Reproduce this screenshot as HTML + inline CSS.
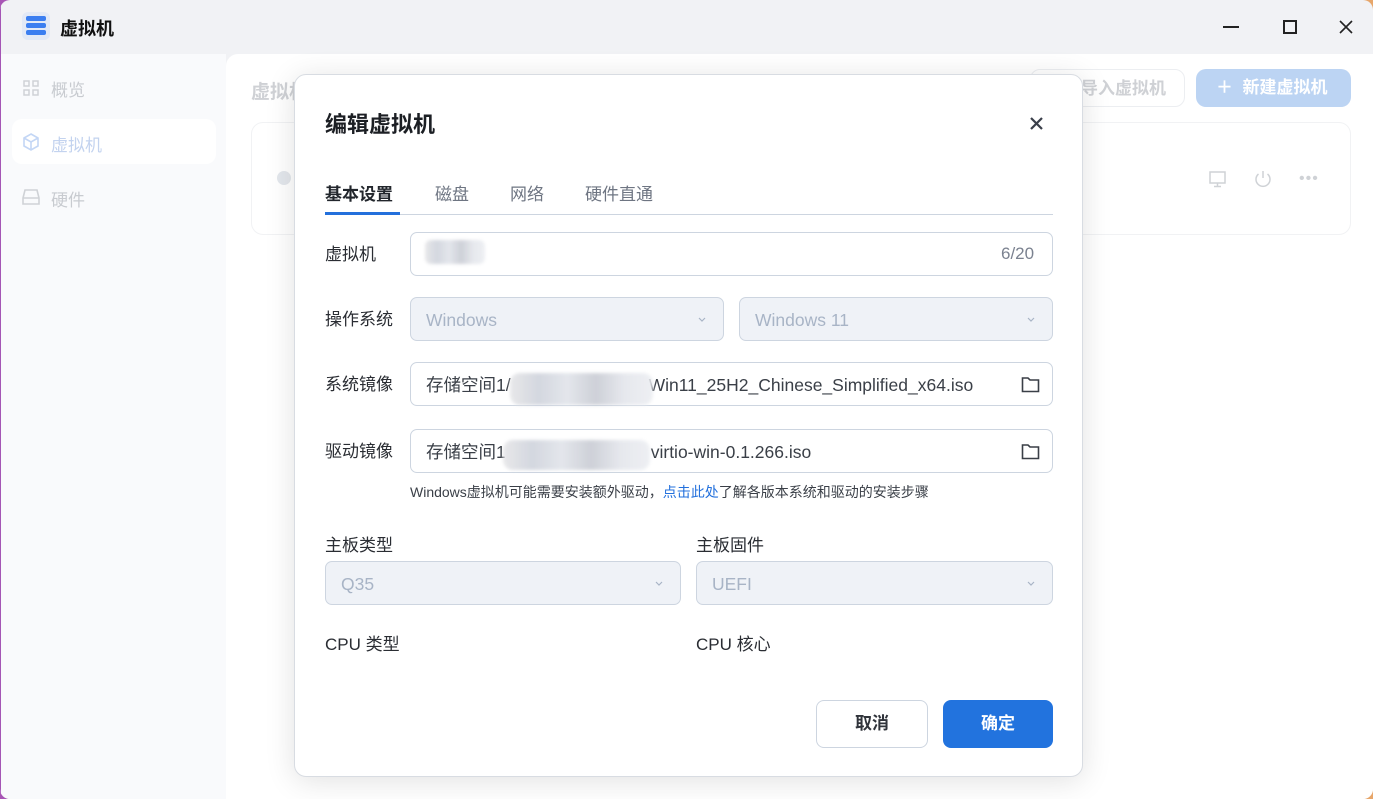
<!DOCTYPE html>
<html><head><meta charset="utf-8">
<style>
*{box-sizing:border-box;margin:0;padding:0}
body{width:1373px;height:799px;overflow:hidden;background:linear-gradient(90deg,#a855b5,#7a4fb0 40%,#e7a66a);font-family:"Liberation Sans","Noto Sans CJK SC",sans-serif;position:relative}
.win{position:absolute;left:0;top:0;width:1373px;height:799px;border-radius:10px;background:#f1f2f5;overflow:hidden}
.abs{position:absolute}
.side{left:0;top:54px;width:226px;height:745px;background:#f9fafc}
.main{left:226px;top:54px;width:1147px;height:745px;background:#fff;border-top-left-radius:12px}
.nav{font-size:17px;color:#c8cbd0}
.modal{left:294px;top:74px;width:789px;height:703px;background:#fff;border:1px solid #d8dce2;border-radius:12px;box-shadow:0 4px 30px rgba(0,0,0,.12)}
.lbl{font-size:17px;color:#2a2d33}
.inp{border:1px solid #cdd5e0;border-radius:7px;background:#fff;height:44px;font-size:17.5px;color:#3a3f47;padding-left:15px;line-height:44px}
.dis{background:#eff2f7;color:#a8b4c6}
.chev{position:absolute;right:16px;top:16px;width:10px;height:10px}
.blur{position:absolute;background:linear-gradient(90deg,#e6e6e8,#cfd3dc 20%,#e1e4ea 40%,#c9ccd4 60%,#e4e6ec 80%,#eceef2);filter:blur(1.5px);opacity:.9}
</style></head><body>
<div class="win">
  <div class="abs" style="left:22px;top:12px;width:28px;height:28px;border-radius:6px;background:#e2e9f6"></div>
  <div class="abs" style="left:26px;top:16px;width:20px;height:5px;border-radius:2px;background:#3b7ef0"></div>
  <div class="abs" style="left:26px;top:23px;width:20px;height:5px;border-radius:2px;background:#3b7ef0"></div>
  <div class="abs" style="left:26px;top:30px;width:20px;height:5px;border-radius:2px;background:#3b7ef0"></div>
  <div class="abs" style="left:60px;top:15px;font-size:18px;font-weight:bold;color:#111">虚拟机</div>
  <div class="abs" style="left:1223px;top:26px;width:16px;height:2px;background:#222"></div>
  <div class="abs" style="left:1283px;top:20px;width:14px;height:14px;border:2px solid #222"></div>
  <svg class="abs" style="left:1338px;top:19px" width="16" height="16"><path d="M2 2L14 14M14 2L2 14" stroke="#222" stroke-width="1.6"/></svg>

  <div class="abs side"></div>
  <div class="abs main"></div>
  <svg class="abs" style="left:23px;top:80px" width="16" height="16"><g fill="none" stroke="#cfd2d6" stroke-width="1.5"><rect x="1" y="1" width="5" height="5"/><rect x="10" y="1" width="5" height="5"/><rect x="1" y="10" width="5" height="5"/><rect x="10" y="10" width="5" height="5"/></g></svg>
  <div class="abs nav" style="left:51px;top:76px">概览</div>
  <div class="abs" style="left:12px;top:119px;width:204px;height:45px;border-radius:10px;background:#fff"></div>
  <svg class="abs" style="left:22px;top:133px" width="18" height="18"><g fill="none" stroke="#c3d6f5" stroke-width="1.6"><path d="M9 1L16 5V13L9 17L2 13V5Z M2 5L9 9L16 5 M9 9V17"/></g></svg>
  <div class="abs nav" style="left:51px;top:131px;color:#c3d3ef">虚拟机</div>
  <svg class="abs" style="left:22px;top:188px" width="18" height="18"><g fill="none" stroke="#cfd2d6" stroke-width="1.6"><path d="M3 2H15L17 10V16H1V10Z M1 10H17"/></g></svg>
  <div class="abs nav" style="left:51px;top:186px">硬件</div>
  <div class="abs" style="left:251px;top:77px;font-size:19px;font-weight:bold;color:#cfd1d5">虚拟机</div>
  <div class="abs" style="left:1030px;top:69px;width:155px;height:38px;border:1px solid #eceef1;border-radius:10px;font-size:17px;font-weight:bold;color:#cfd1d5;line-height:38px;padding-left:50px">导入虚拟机</div>
  <div class="abs" style="left:1196px;top:69px;width:155px;height:38px;border-radius:10px;background:#bcd4f3;font-size:17px;font-weight:bold;color:#fff;line-height:38px;padding-left:20px">＋&nbsp; 新建虚拟机</div>
  <div class="abs" style="left:251px;top:122px;width:1100px;height:113px;border:1px solid #f1f2f4;border-radius:12px"></div>
  <div class="abs" style="left:277px;top:171px;width:14px;height:14px;border-radius:50%;background:#e3e7ec"></div>
  <svg class="abs" style="left:1208px;top:170px" width="20" height="18"><g fill="none" stroke="#cfd2d6" stroke-width="1.5"><rect x="2" y="2" width="15" height="11"/><path d="M9.5 13V16M6 16.5H13"/></g></svg>
  <svg class="abs" style="left:1253px;top:169px" width="20" height="20"><g fill="none" stroke="#cfd2d6" stroke-width="1.5"><path d="M10 2V9M5.5 5A7 7 0 1 0 14.5 5"/></g></svg>
  <div class="abs" style="left:1299px;top:170px;font-size:16px;color:#cfd2d6;letter-spacing:1px">•••</div>

  <div class="abs modal"></div>
  <div class="abs" style="left:325px;top:107px;font-size:22px;font-weight:bold;color:#1c1f24">编辑虚拟机</div>
  <svg class="abs" style="left:1029px;top:116px" width="15" height="15"><path d="M2 2L13 13M13 2L2 13" stroke="#3a3f4a" stroke-width="2.2"/></svg>
  <div class="abs" style="left:325px;top:180px;font-size:17px;font-weight:bold;color:#22262c">基本设置</div>
  <div class="abs" style="left:435px;top:180px;font-size:17px;color:#6e7582">磁盘</div>
  <div class="abs" style="left:510px;top:180px;font-size:17px;color:#6e7582">网络</div>
  <div class="abs" style="left:585px;top:180px;font-size:17px;color:#6e7582">硬件直通</div>
  <div class="abs" style="left:325px;top:214px;width:728px;height:1px;background:#cdd5e0"></div>
  <div class="abs" style="left:325px;top:212px;width:75px;height:3px;background:#2370dc"></div>

  <div class="abs lbl" style="left:325px;top:240px">虚拟机</div>
  <div class="abs inp" style="left:410px;top:232px;width:643px"></div>
  <div class="blur" style="left:425px;top:240px;width:60px;height:24px;border-radius:6px"></div>
  <div class="abs" style="left:1001px;top:244px;font-size:17px;color:#7b8290">6/20</div>

  <div class="abs lbl" style="left:325px;top:305px">操作系统</div>
  <div class="abs inp dis" style="left:410px;top:297px;width:314px">Windows<svg class="chev" viewBox="0 0 10 10"><path d="M2 4L5 7L8 4" fill="none" stroke="#a8b4c6" stroke-width="1.2"/></svg></div>
  <div class="abs inp dis" style="left:739px;top:297px;width:314px">Windows 11<svg class="chev" viewBox="0 0 10 10"><path d="M2 4L5 7L8 4" fill="none" stroke="#a8b4c6" stroke-width="1.2"/></svg></div>

  <div class="abs lbl" style="left:325px;top:370px">系统镜像</div>
  <div class="abs inp" style="left:410px;top:362px;width:643px">存储空间1/<span style="display:inline-block;width:138px"></span>Win11_25H2_Chinese_Simplified_x64.iso</div>
  <div class="blur" style="left:510px;top:373px;width:143px;height:32px;border-radius:10px"></div>

  <div class="abs lbl" style="left:325px;top:437px">驱动镜像</div>
  <div class="abs inp" style="left:410px;top:429px;width:643px">存储空间1<span style="display:inline-block;width:145px"></span>virtio-win-0.1.266.iso</div>
  <div class="blur" style="left:503px;top:440px;width:147px;height:30px;border-radius:10px"></div>
  <svg class="abs" style="left:1021px;top:376px" width="19" height="17"><path d="M1.5 2H7L9 4H17.5V15.5H1.5Z" fill="none" stroke="#3a3f47" stroke-width="1.6"/></svg>
  <svg class="abs" style="left:1021px;top:443px" width="19" height="17"><path d="M1.5 2H7L9 4H17.5V15.5H1.5Z" fill="none" stroke="#3a3f47" stroke-width="1.6"/></svg>
  <div class="abs" style="left:410px;top:482px;font-size:14px;color:#3a3f47">Windows虚拟机可能需要安装额外驱动，<span style="color:#2370dc">点击此处</span>了解各版本系统和驱动的安装步骤</div>

  <div class="abs lbl" style="left:325px;top:531px">主板类型</div>
  <div class="abs lbl" style="left:696px;top:531px">主板固件</div>
  <div class="abs inp dis" style="left:325px;top:561px;width:356px">Q35<svg class="chev" viewBox="0 0 10 10"><path d="M2 4L5 7L8 4" fill="none" stroke="#a8b4c6" stroke-width="1.2"/></svg></div>
  <div class="abs inp dis" style="left:696px;top:561px;width:357px">UEFI<svg class="chev" viewBox="0 0 10 10"><path d="M2 4L5 7L8 4" fill="none" stroke="#a8b4c6" stroke-width="1.2"/></svg></div>
  <div class="abs lbl" style="left:325px;top:630px">CPU 类型</div>
  <div class="abs lbl" style="left:696px;top:630px">CPU 核心</div>

  <div class="abs" style="left:816px;top:700px;width:112px;height:48px;border:1px solid #cdd5e0;border-radius:8px;text-align:center;line-height:46px;font-size:17px;font-weight:bold;color:#30343b">取消</div>
  <div class="abs" style="left:943px;top:700px;width:110px;height:48px;border-radius:8px;background:#2273de;text-align:center;line-height:48px;font-size:17px;font-weight:bold;color:#fff">确定</div>
  <div class="abs" style="left:0;top:0;width:1px;height:799px;background:#a455b5"></div>
</div>
</body></html>
